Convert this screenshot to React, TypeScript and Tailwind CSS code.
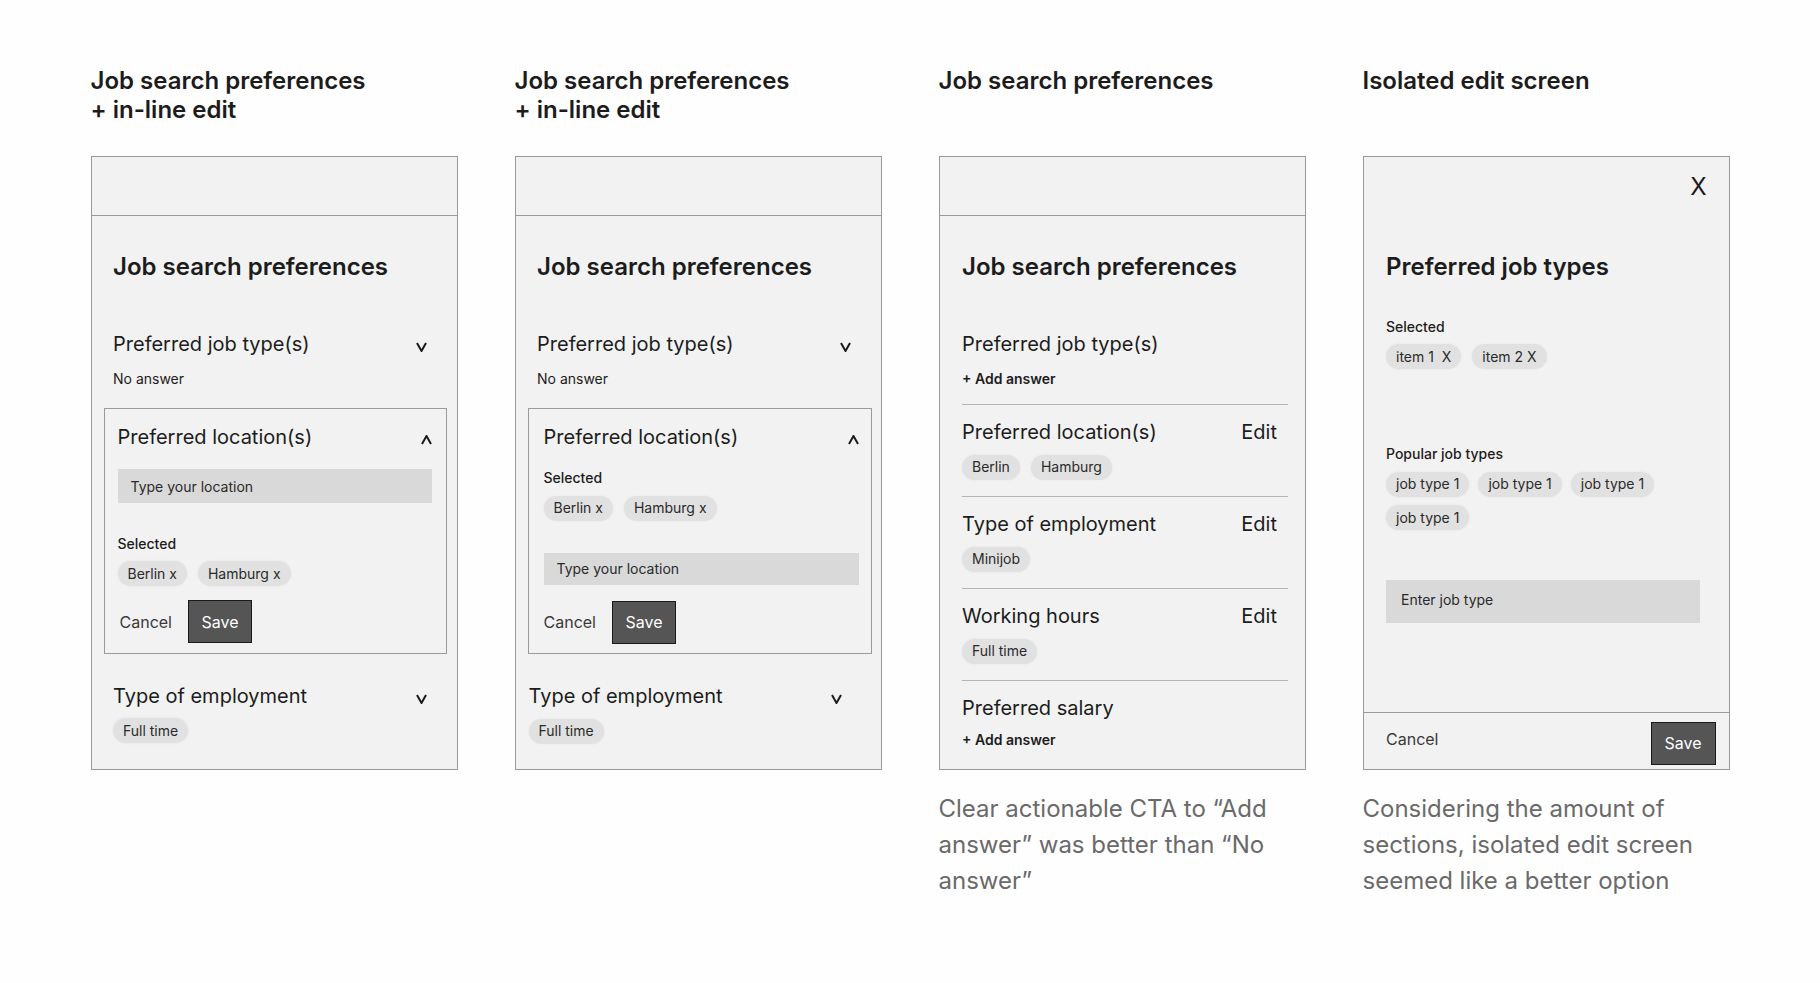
import React from 'react';

const ink = 'text-[#1c1c1c]';

function Chevron({ up = false }: { up?: boolean }) {
  return (
    <svg
      width="11"
      height="10"
      viewBox="0 0 11 10"
      className={up ? 'mt-[6px] rotate-180' : 'mt-[6px]'}
      fill="none"
    >
      <path d="M1 1 L5.5 9 L10 1" stroke="#1c1c1c" strokeWidth="2" strokeLinejoin="miter" />
    </svg>
  );
}

function Chip({ children }: { children: React.ReactNode }) {
  return (
    <span className="inline-flex h-[25px] items-center whitespace-pre rounded-full bg-[#e1e1e1] px-[10px] text-[14px] leading-none text-[#2a2a2a] shadow-[0_0_3px_rgba(0,0,0,0.06)]">
      {children}
    </span>
  );
}

function SaveButton({ className = '' }: { className?: string }) {
  return (
    <button
      className={`flex h-[43px] w-[64px] items-center justify-center border border-[#1a1a1a] bg-[#555555] text-[16px] text-white ${className}`}
    >
      Save
    </button>
  );
}

function Frame({ children, className = '' }: { children: React.ReactNode; className?: string }) {
  return (
    <div className={`h-[614px] w-[367px] border border-[#9a9a9a] bg-[#f2f2f2] ${className}`}>{children}</div>
  );
}

function TopBand() {
  return <div className="h-[59px] border-b border-[#9a9a9a]" />;
}

function PanelTitle({ children }: { children: React.ReactNode }) {
  return <h2 className={`text-[24px] font-semibold leading-[29px] ${ink}`}>{children}</h2>;
}

function Heading({ lines }: { lines: string[] }) {
  return (
    <div className="h-[90.5px]">
      {lines.map((l) => (
        <div key={l} className={`text-[24px] font-semibold leading-[29px] ${ink}`}>
          {l}
        </div>
      ))}
    </div>
  );
}

function Caption({ lines }: { lines: string[] }) {
  return (
    <p className="mt-[20.5px] text-[24px] leading-[36px] text-[#6a6a6a]">
      {lines.map((l, i) => (
        <React.Fragment key={i}>
          {l}
          {i < lines.length - 1 && <br />}
        </React.Fragment>
      ))}
    </p>
  );
}

function LocationInput({ className = '' }: { className?: string }) {
  return (
    <div className={`flex items-center bg-[#d9d9d9] pl-[13px] text-[14px] text-[#2a2a2a] ${className}`}>
      Type your location
    </div>
  );
}

function InlineEditA() {
  return (
    <Frame>
      <TopBand />
      <div className="px-[21.5px] pt-[35.5px]">
        <PanelTitle>Job search preferences</PanelTitle>
      </div>
      <div className={`mt-[51px] flex items-center justify-between pl-[21.5px] pr-[30px] text-[20px] leading-[24px] ${ink}`}>
        <span>Preferred job type(s)</span>
        <Chevron />
      </div>
      <div className={`mt-[13px] pl-[21.5px] text-[14px] leading-[20px] ${ink}`}>No answer</div>
      <div className="ml-[12px] mr-[10px] mt-[19px] border border-[#9a9a9a] pb-[9.5px] pl-[13px] pr-[14px] pt-[16px]">
        <div className={`flex items-center justify-between text-[20px] leading-[24px] ${ink}`}>
          <span>Preferred location(s)</span>
          <Chevron up />
        </div>
        <LocationInput className="mt-[20.5px] h-[34px]" />
        <div className={`mt-[30.5px] text-[14px] font-medium leading-[20px] ${ink}`}>Selected</div>
        <div className="mt-[7.5px] flex gap-[11px]">
          <Chip>Berlin x</Chip>
          <Chip>Hamburg x</Chip>
        </div>
        <div className="mt-[14px] flex items-center gap-[16px]">
          <span className="ml-[2px] text-[16px] text-[#3a3a3a]">Cancel</span>
          <SaveButton />
        </div>
      </div>
      <div className={`mt-[30px] flex items-center justify-between pl-[21.5px] pr-[30px] text-[20px] leading-[24px] ${ink}`}>
        <span>Type of employment</span>
        <Chevron />
      </div>
      <div className="mt-[10px] pl-[21.5px]">
        <Chip>Full time</Chip>
      </div>
    </Frame>
  );
}

function InlineEditB() {
  return (
    <Frame>
      <TopBand />
      <div className="px-[21.5px] pt-[35.5px]">
        <PanelTitle>Job search preferences</PanelTitle>
      </div>
      <div className={`mt-[51px] flex items-center justify-between pl-[21.5px] pr-[30px] text-[20px] leading-[24px] ${ink}`}>
        <span>Preferred job type(s)</span>
        <Chevron />
      </div>
      <div className={`mt-[13px] pl-[21.5px] text-[14px] leading-[20px] ${ink}`}>No answer</div>
      <div className="ml-[12px] mr-[9px] mt-[19px] border border-[#9a9a9a] pb-[9.5px] pl-[15px] pr-[12px] pt-[16px]">
        <div className={`flex items-center justify-between text-[20px] leading-[24px] ${ink}`}>
          <span>Preferred location(s)</span>
          <Chevron up />
        </div>
        <div className={`mt-[19.5px] text-[14px] font-medium leading-[20px] ${ink}`}>Selected</div>
        <div className="mt-[7.5px] flex gap-[11px]">
          <Chip>Berlin x</Chip>
          <Chip>Hamburg x</Chip>
        </div>
        <LocationInput className="mt-[32px] h-[32.5px]" />
        <div className="mt-[15.5px] flex items-center gap-[16px]">
          <span className="text-[16px] text-[#3a3a3a]">Cancel</span>
          <SaveButton />
        </div>
      </div>
      <div className={`mt-[30px] flex items-center justify-between pl-[13px] pr-[39px] text-[20px] leading-[24px] ${ink}`}>
        <span>Type of employment</span>
        <Chevron />
      </div>
      <div className="mt-[10px] pl-[13px]">
        <Chip>Full time</Chip>
      </div>
    </Frame>
  );
}

function Section({ title, chips, last = false }: { title: string; chips?: string[]; last?: boolean }) {
  return (
    <div className={`border-t border-[#b5b5b5] pt-[15px] ${last ? '' : 'pb-[16.5px]'}`}>
      <div className={`flex items-center justify-between text-[20px] leading-[24px] ${ink}`}>
        <span>{title}</span>
        {chips && <span className="mr-[10.5px]">Edit</span>}
      </div>
      {chips ? (
        <div className="mt-[10.5px] flex gap-[11px]">
          {chips.map((c) => (
            <Chip key={c}>{c}</Chip>
          ))}
        </div>
      ) : (
        <div className={`mt-[9.5px] text-[14px] font-semibold leading-[20px] ${ink}`}>+ Add answer</div>
      )}
    </div>
  );
}

function SummaryPanel() {
  return (
    <Frame>
      <TopBand />
      <div className="pl-[22.5px] pr-[17px] pt-[35.5px]">
        <PanelTitle>Job search preferences</PanelTitle>
        <div className={`mt-[51px] text-[20px] leading-[24px] ${ink}`}>Preferred job type(s)</div>
        <div className={`mt-[13px] text-[14px] font-semibold leading-[20px] ${ink}`}>+ Add answer</div>
        <div className="mt-[15.5px]">
          <Section title="Preferred location(s)" chips={['Berlin', 'Hamburg']} />
          <Section title="Type of employment" chips={['Minijob']} />
          <Section title="Working hours" chips={['Full time']} />
          <Section title="Preferred salary" last />
        </div>
      </div>
    </Frame>
  );
}

function IsolatedPanel() {
  return (
    <Frame className="flex flex-col">
      <div className="flex-1 pl-[22.5px] pr-[22px]">
        <div className={`flex justify-end pt-[14.5px] text-[24px] leading-[29px] ${ink}`}>X</div>
        <div className="mt-[51px]">
          <PanelTitle>Preferred job types</PanelTitle>
        </div>
        <div className={`mt-[36px] text-[14px] font-medium leading-[20px] ${ink}`}>Selected</div>
        <div className="mt-[7.5px] flex gap-[11px]">
          <Chip>item 1  X</Chip>
          <Chip>item 2 X</Chip>
        </div>
        <div className={`mt-[75px] text-[14px] font-medium leading-[20px] ${ink}`}>Popular job types</div>
        <div className="mt-[7.5px] flex flex-wrap gap-x-[9px] gap-y-[8.5px]">
          <Chip>job type 1</Chip>
          <Chip>job type 1</Chip>
          <Chip>job type 1</Chip>
          <Chip>job type 1</Chip>
        </div>
        <div className="mr-[7px] mt-[50px] flex h-[43px] items-center bg-[#d9d9d9] pb-[4px] pl-[15px] text-[14px] text-[#2a2a2a]">
          Enter job type
        </div>
      </div>
      <div className="flex h-[57px] items-start justify-between border-t border-[#9a9a9a] pl-[22.5px] pr-[13px]">
        <span className="mt-[15.5px] text-[16px] leading-[20px] text-[#3a3a3a]">Cancel</span>
        <SaveButton className="mt-[8.5px] h-[42px] w-[65px]" />
      </div>
    </Frame>
  );
}

export default function App() {
  return (
    <div className="min-h-screen bg-[#fefefe] font-['Inter','Noto_Sans',sans-serif] antialiased">
      <div className="flex gap-[57px] pl-[90.5px] pt-[65.5px]">
        <div className="w-[367px]">
          <Heading lines={['Job search preferences', '+ in-line edit']} />
          <InlineEditA />
        </div>
        <div className="w-[367px]">
          <Heading lines={['Job search preferences', '+ in-line edit']} />
          <InlineEditB />
        </div>
        <div className="w-[367px]">
          <Heading lines={['Job search preferences']} />
          <SummaryPanel />
          <Caption lines={['Clear actionable CTA to “Add', 'answer” was better than “No', 'answer”']} />
        </div>
        <div className="w-[367px]">
          <Heading lines={['Isolated edit screen']} />
          <IsolatedPanel />
          <Caption lines={['Considering the amount of', 'sections, isolated edit screen', 'seemed like a better option']} />
        </div>
      </div>
    </div>
  );
}
